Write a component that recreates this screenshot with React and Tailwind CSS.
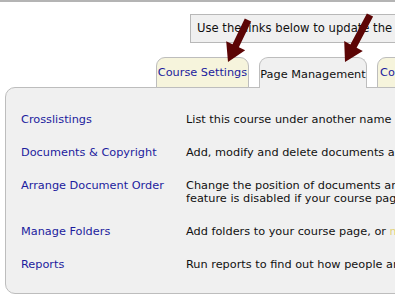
import React from "react";

const rows = [
  { link: "Crosslistings", desc: ["List this course under another name or number"] },
  { link: "Documents & Copyright", desc: ["Add, modify and delete documents and folders on your course page"] },
  {
    link: "Arrange Document Order",
    desc: [
      "Change the position of documents and folders on your course page. This",
      "feature is disabled if your course page is sorted alphabetically.",
    ],
  },
  { link: "Manage Folders", desc: ["Add folders to your course page, or manage existing folders"], yellow: true },
  { link: "Reports", desc: ["Run reports to find out how people are using your course page"] },
];

export default function App() {
  return (
    <div className="relative w-[395px] h-[300px] overflow-hidden bg-white font-['DejaVu_Sans',Verdana,sans-serif] text-[11.3px] leading-[13px] text-[#111]">
      <div className="w-[800px]">
        <div className="h-[2px] bg-[#b4b4b4]" />
        <div className="pl-[190px] pt-[12px]">
          <div className="h-[29px] w-[560px] border border-[#b8b8b8] bg-[#f0f0f0] px-[6px] flex items-center whitespace-nowrap text-[11.6px]">
            Use the links below to update the course page settings and content.
          </div>
        </div>
        <div className="relative z-10 flex gap-[10px] pl-[156px] mt-[14px] -mb-px">
          <div className="w-[93px] h-[31px] border border-[#bdbdbd] rounded-t-[9px] bg-[#f6f4dc] flex items-center justify-center text-[#1c1c9e] whitespace-nowrap">
            Course Settings
          </div>
          <div className="w-[108px] h-[31px] border border-b-0 border-[#bdbdbd] rounded-t-[9px] bg-[#f0f0f0] flex items-center justify-center pt-[2px] whitespace-nowrap">
            Page Management
          </div>
          <div className="w-[100px] h-[31px] border border-[#bdbdbd] rounded-t-[9px] bg-[#f6f4dc] flex items-center pl-[2px] text-[#1c1c9e] whitespace-nowrap">
            Course Tools
          </div>
        </div>
        <div className="ml-[5px] w-[700px] border border-[#bdbdbd] rounded-[10px] bg-[#f0f0f0] pt-[15px] pb-[12px] pl-[15px]">
          {rows.map((r) => (
            <div key={r.link} className="grid grid-cols-[165px_1fr] py-[10px]">
              <div className="text-[#1c1c9e] whitespace-nowrap">{r.link}</div>
              <div className="whitespace-nowrap">
                {r.desc.map((d, i) =>
                  r.yellow ? (
                    <div key={i}>
                      Add folders to your course page, or <span className="text-[#e2d37a]">manage existing folders</span>
                    </div>
                  ) : (
                    <div key={i}>{d}</div>
                  )
                )}
              </div>
            </div>
          ))}
        </div>
      </div>
      <svg className="absolute inset-0 z-20 pointer-events-none" width="395" height="300" viewBox="0 0 395 300">
        <polygon
          fill="#5c0505"
          points="251.2,21.5 238.9,47.3 245.2,50.3 228,62 226.2,41.2 232.5,44.3 244.8,18.5"
        />
        <polygon
          fill="#5c0505"
          points="373.1,16.6 356.6,47.7 362.8,51 345,62 344.2,41.1 350.4,44.5 366.9,13.4"
        />
      </svg>
    </div>
  );
}
